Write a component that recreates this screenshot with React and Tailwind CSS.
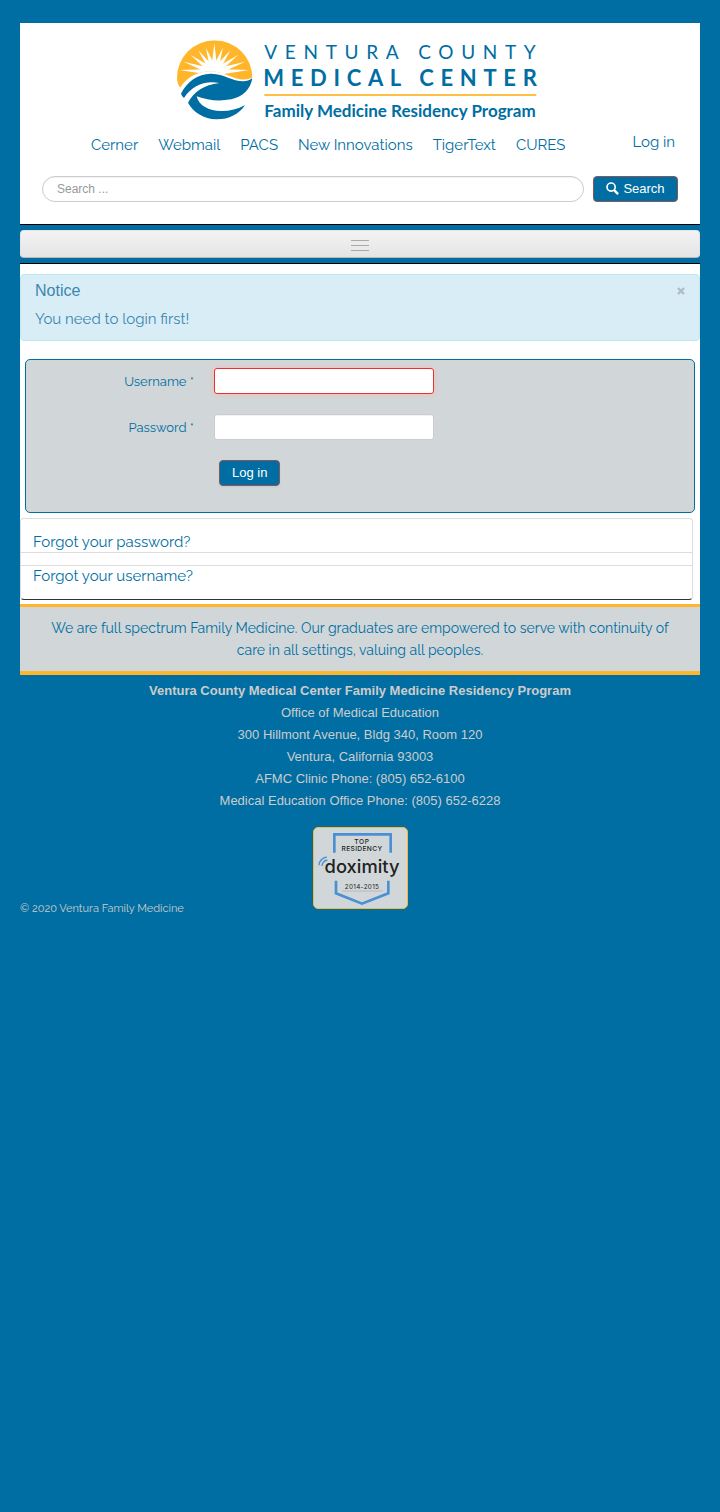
const RAYS = [
  [-86, 104], [-71, 98], [-54, 88], [-36, 82], [-19, 78], [0, 88],
  [19, 78], [36, 82], [54, 88], [71, 98], [86, 104],
];

function Logo() {
  return (
    <svg viewBox="0 0 1104 246" className="w-[368px] max-w-full" role="img" aria-label="Ventura County Medical Center Family Medicine Residency Program">
      <defs>
        <clipPath id="sky">
          <path d="M18 152C12 142 9 134 9 122A113 112 0 0 1 235 122C222 127 208 129 198 127C172 122 146 105 112 103C72 101 38 122 18 152Z" />
        </clipPath>
      </defs>
      <g transform="translate(-6 -9)">
        <g clipPath="url(#sky)">
          <rect width="240" height="160" fill="#ffb62b" />
          <circle cx="121" cy="102" r="32" fill="#fff" />
          {RAYS.map(([angle, length]) => (
            <path key={angle} d={`M114 78L121 ${106 - length}L128 78Z`} fill="#fff" transform={`rotate(${angle} 121 106)`} />
          ))}
        </g>
        <path
          fill="#006ea2"
          d="M21 170C38 134 74 109 112 110C152 111 174 133 208 133C218 133 227 130 235 124C230 156 206 180 172 187C134 194 100 190 68 178C74 206 104 222 142 222C168 222 192 216 213 204C196 232 162 248 126 247C90 246 58 226 42 197C58 166 90 143 136 138C92 130 54 146 30 183Q23 177 21 170Z"
        />
      </g>
      <g fill="#006ea2" fontFamily="Lato, sans-serif">
        <text x="265" y="58" fontSize="57" fontWeight="400" letterSpacing="23">VENTURA COUNTY</text>
        <text x="262" y="137" fontSize="66" fontWeight="700" letterSpacing="20">MEDICAL CENTER</text>
        <text x="265" y="231" fontSize="51" fontWeight="700">Family Medicine Residency Program</text>
      </g>
      <rect x="265" y="162" width="816" height="6" fill="#ffbe45" />
    </svg>
  );
}

function Badge() {
  return (
    <svg viewBox="0 0 279 240" className="w-[93px]" role="img" aria-label="Doximity top residency 2014-2015">
      <g fill="none" stroke="#4a90d2" strokeWidth="8">
        <path d="M61 74V19H230V74" />
        <path d="M66 158V196L144 227L223 196V158" />
        <path d="M15 112Q16 92 38 87M24 114Q25 99 40 96" strokeWidth="4" />
      </g>
      <g fill="#222" fontFamily="Inter, sans-serif" textAnchor="middle">
        <text x="144" y="49" fontSize="20" fontWeight="500" letterSpacing="2">TOP</text>
        <text x="144" y="70" fontSize="20" fontWeight="500" letterSpacing="1">RESIDENCY</text>
        <text x="144" y="135" fontSize="55" fontWeight="500">doximity</text>
        <text x="144" y="182" fontSize="19" letterSpacing="1">2014-2015</text>
      </g>
      <path d="M84 189H206" stroke="#aaa" strokeWidth="2" />
    </svg>
  );
}

const LINKS = ["Cerner", "Webmail", "PACS", "New Innovations", "TigerText", "CURES"];
const ADDRESS = [
  "Office of Medical Education",
  "300 Hillmont Avenue, Bldg 340, Room 120",
  "Ventura, California 93003",
  "AFMC Clinic Phone: (805) 652-6100",
  "Medical Education Office Phone: (805) 652-6228",
];

export default function App() {
  return (
    <div className="min-h-screen bg-[#006ea2] px-5 pt-[23px] pb-10 font-['Raleway','Open_Sans',sans-serif] text-[15px] leading-[22px] font-normal text-[#006ea2]">
      <header className="border-b border-black bg-white px-[22px] pt-[17px] pb-[22px]">
        <div className="flex justify-center">
          <Logo />
        </div>
        <div className="mt-[9px] flex items-start justify-between pr-[3px] pl-[49px]">
          <nav className="flex flex-wrap gap-x-5 pt-[3px]">
            {LINKS.map((name) => (
              <a key={name} href="#">{name}</a>
            ))}
          </nav>
          <a href="#">Log in</a>
        </div>
        <form className="mt-5 flex gap-[9px] font-['Liberation_Sans',sans-serif]">
          <input
            type="search"
            aria-label="Search"
            placeholder="Search ..."
            className="h-[26px] min-w-0 flex-1 rounded-full border border-[#ccc] bg-white px-3.5 text-[12px] inset-shadow-2xs placeholder:text-[#999]"
          />
          <button type="button" className="flex h-[26px] w-[85px] items-center justify-center gap-1 rounded-[4px] border border-[#87555a] bg-[#006ea2] text-[13px] text-white">
            <svg viewBox="0 0 14 14" className="mb-0.5 size-[13px]" fill="none" stroke="currentColor" aria-hidden="true">
              <circle cx="5.5" cy="5.5" r="4.4" strokeWidth="1.8" />
              <path d="M8.5 8.5L13 13" strokeWidth="2.6" />
            </svg>
            Search
          </button>
        </form>
      </header>

      <div className="border-b border-black py-[5px]">
        <button type="button" aria-label="Toggle navigation" className="flex h-7 w-full items-center justify-center rounded-[4px] border border-[#e4e4e4] border-b-[#bbb] bg-linear-to-b from-[#f2f2f2] to-[#e5e5e5] pt-[3px]">
          <span className="flex flex-col gap-1">
            <span className="h-px w-[18px] bg-[#aaa]" />
            <span className="h-px w-[18px] bg-[#aaa]" />
            <span className="h-px w-[18px] bg-[#aaa]" />
          </span>
        </button>
      </div>

      <main className="bg-white pt-2.5 pb-1">
        <section className="flex items-start justify-between rounded-[4px] border border-[#bce8f1] bg-[#d9edf7] px-3.5 pt-[5px] pb-[10px] text-[#3a87ad]">
          <div>
            <h4 className="font-['Liberation_Sans',sans-serif] text-[16px]">Notice</h4>
            <p className="mt-1.5">You need to login first!</p>
          </div>
          <button type="button" aria-label="Close" className="mt-[7px] text-[#adbec6]">
            <svg viewBox="0 0 8 8" className="size-2" stroke="currentColor" strokeWidth="2.4" aria-hidden="true">
              <path d="M1 1L7 7M7 1L1 7" />
            </svg>
          </button>
        </section>

        <form className="mx-[5px] mt-[18px] rounded-[5px] border border-[#006ea2] bg-[#d1d7d9] pt-2 pb-[26px] text-[13px]">
          <div className="flex items-center gap-5">
            <label htmlFor="username" className="w-[168px] pt-0.5 text-right">Username *</label>
            <input id="username" type="text" className="h-[26px] w-[220px] rounded-[3px] border border-[#e9322d] bg-white px-1.5 shadow-[0_0_6px_#f8b9b7]" />
          </div>
          <div className="mt-5 flex items-center gap-5">
            <label htmlFor="password" className="w-[168px] pt-0.5 text-right">Password *</label>
            <input id="password" type="password" className="h-[26px] w-[220px] rounded-[3px] border border-[#ccc] bg-white px-1.5 inset-shadow-2xs" />
          </div>
          <button type="button" className="mt-5 ml-[193px] block h-[26px] rounded-[4px] border border-[#87555a] bg-[#006ea2] px-3 font-['Liberation_Sans',sans-serif] text-white shadow-xs">
            Log in
          </button>
        </form>

        <ul className="mt-[5px] mr-[7px] rounded-[4px] border border-[#ddd] border-b-[#333] leading-5">
          <li className="border-b border-[#ddd] pt-[13px] pl-3">
            <a href="#" className="block">Forgot your password?</a>
          </li>
          <li className="mt-3 border-t border-[#ddd] pb-[13px] pl-3">
            <a href="#" className="block">Forgot your username?</a>
          </li>
        </ul>
      </main>

      <footer>
        <p className="border-t-[3px] border-b-4 border-[#ffb62b] bg-[#d1d7d9] px-5 py-2.5 text-center text-[14px]">
          We are full spectrum Family Medicine. Our graduates are empowered to serve with continuity of care in all settings, valuing all peoples.
        </p>
        <address className="mt-[5px] text-center font-['Liberation_Sans',sans-serif] text-[13px] text-[#ccc] not-italic">
          <strong className="block font-bold">Ventura County Medical Center Family Medicine Residency Program</strong>
          {ADDRESS.map((line) => (
            <span key={line} className="block">{line}</span>
          ))}
        </address>
        <div className="mt-[15px] grid grid-cols-[1fr_auto_1fr] items-end">
          <p className="-mb-[11px] text-[11px] text-[#ccc]">© 2020 Ventura Family Medicine</p>
          <a href="#" className="rounded-[5px] border border-[#ffb62b] bg-[#d1d7d9]">
            <Badge />
          </a>
        </div>
      </footer>
    </div>
  );
}
